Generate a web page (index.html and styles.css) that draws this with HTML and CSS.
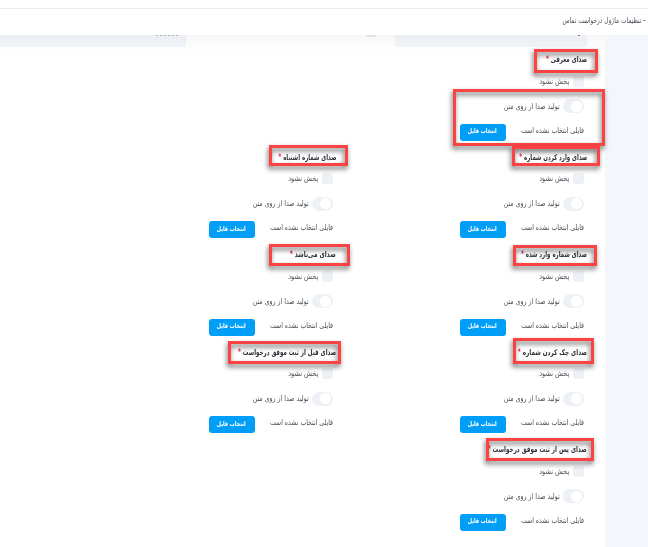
FILE: index.html
```
<!DOCTYPE html>
<html lang="fa" dir="rtl">
<head>
<meta charset="utf-8">
<title>تنظیمات ماژول درخواست تماس</title>
<link rel="stylesheet" href="styles.css">
</head>
<body>
<header class="topbar"><div class="breadcrumb"><span>-</span><span class="fit" data-w="79">تنظیمات ماژول درخواست تماس</span></div></header>
<main class="page">
  <section class="card">
    <div class="fields">
      <div class="input input-right"><div class="speck"></div></div>
      <div class="stub"></div>
      <div class="input input-left"><div class="dots"></div></div>
      <div class="fade"></div>
    </div>
    <div class="grid" id="grid"></div>
  </section>
</main>
<div class="mark m1"></div>
<div class="mark m2"></div>
<div class="mark m3"></div>
<div class="mark m4"></div>
<div class="mark m5"></div>
<div class="mark m6"></div>
<div class="mark m7"></div>
<div class="mark m8"></div>
<div class="mark m9"></div>
<script src="script.js"></script>
</body>
</html>
```
FILE: styles.css
```
* { box-sizing: border-box; }
body { margin: 0; width: 648px; height: 547px; overflow: hidden; position: relative; background: #f3f7fb; font-family: "DejaVu Sans", sans-serif; font-size: 8px; color: #4c4c58; }
.fit { display: block; width: max-content; white-space: nowrap; transform-origin: right center; }
.topbar { height: 35px; background: #fff; padding-top: 8px; }
.breadcrumb { height: 27px; border-top: 1px solid #eeeeef; display: flex; gap: 2px; align-items: center; padding-right: 2px; padding-bottom: 3px; }
.page { padding-right: 43px; }
.card { height: 512px; background: #fff; padding-right: 18px; }
.fields { height: 13px; display: flex; position: relative; }
.input { height: 12px; background: #f1f5f9; border-radius: 0 0 3px 3px; }
.input-right { width: 192px; }
.speck { width: 2px; height: 1px; margin-right: 7px; background: #85858f; }
.stub { width: 11px; height: 2px; background: #e6e7ee; border-radius: 0 0 4px 4px; margin-right: 18px; }
.input-left { flex: 1; margin-right: 180px; }
.dots { width: 22px; height: 1px; margin-right: 8px; background: repeating-linear-gradient(90deg, #b4b4be 0 2px, transparent 2px 4px); }
.fade { position: absolute; inset: 0 -18px 0 0; height: 16px; background: linear-gradient(rgba(90, 70, 90, .045), transparent); }
.grid { display: grid; grid-template-columns: 251px 251px; grid-auto-rows: 97.6px; }
.title { height: 24px; line-height: 24px; font-weight: bold; color: #30303a; }
.title i { color: #f03050; font-style: normal; }
.row { display: flex; align-items: center; padding-right: 3px; }
.check { height: 18px; gap: 4px; }
.box { width: 11px; height: 11px; border-radius: 3px; background: #edf1f5; }
.toggle { height: 32px; gap: 3px; }
.switch { width: 21px; height: 14px; border-radius: 7px; background: #edf1f5; padding: 1.5px 2px; }
.knob { display: block; width: 11px; height: 11px; border-radius: 50%; background: #fff; }
.file { height: 19px; }
.none { width: 78px; padding-bottom: 3px; }
.btn { width: 46px; height: 17px; border-radius: 3px; background: #009ef7; color: #fff; font-weight: bold; font-size: 6.6px; display: flex; align-items: center; padding: 0 9px 2px 0; margin-top: 1px; }
.mark { position: absolute; border: 3px solid #fb4343; filter: drop-shadow(-1px 3px 2.5px rgba(0, 0, 0, .6)); }
.m1 { left: 534px; top: 49px; width: 64px; height: 24px; }
.m2 { left: 453px; top: 89px; width: 152px; height: 57px; }
.m3 { left: 512px; top: 146px; width: 88px; height: 20px; }
.m4 { left: 269px; top: 145px; width: 79px; height: 21px; }
.m5 { left: 513px; top: 245px; width: 84px; height: 21px; }
.m6 { left: 269px; top: 244px; width: 81px; height: 22px; }
.m7 { left: 513px; top: 338px; width: 81px; height: 26px; }
.m8 { left: 228px; top: 341px; width: 113px; height: 23px; }
.m9 { left: 486px; top: 438px; width: 108px; height: 23px; }
```
FILE: script.js
```
const fields = [
  ["صدای معرفی", 41], null,
  ["صدای وارد کردن شماره", 68], ["صدای شماره اشتباه", 58],
  ["صدای شماره وارد شده", 66], ["صدای می‌باشد", 46],
  ["صدای چک کردن شماره", 69], ["صدای قبل از ثبت موفق درخواست", 98],
  ["صدای پس از ثبت موفق درخواست", 99]
];
document.getElementById("grid").innerHTML = fields.map(f => f ? `
<div class="field">
  <div class="title"><span class="fit" data-w="${f[1]}">${f[0]} <i>*</i></span></div>
  <div class="row check"><span class="box"></span><span class="fit" data-w="30">پخش نشود</span></div>
  <div class="row toggle"><span class="switch"><span class="knob"></span></span><span class="fit" data-w="56">تولید صدا از روی متن</span></div>
  <div class="row file"><span class="none"><span class="fit" data-w="63">فایلی انتخاب نشده است</span></span><span class="btn"><span class="fit" data-w="29">انتخاب فایل</span></span></div>
</div>` : "<div></div>").join("");
document.querySelectorAll(".fit").forEach(el => {
  el.style.transform = `scaleX(${el.dataset.w / el.getBoundingClientRect().width})`;
});
```
